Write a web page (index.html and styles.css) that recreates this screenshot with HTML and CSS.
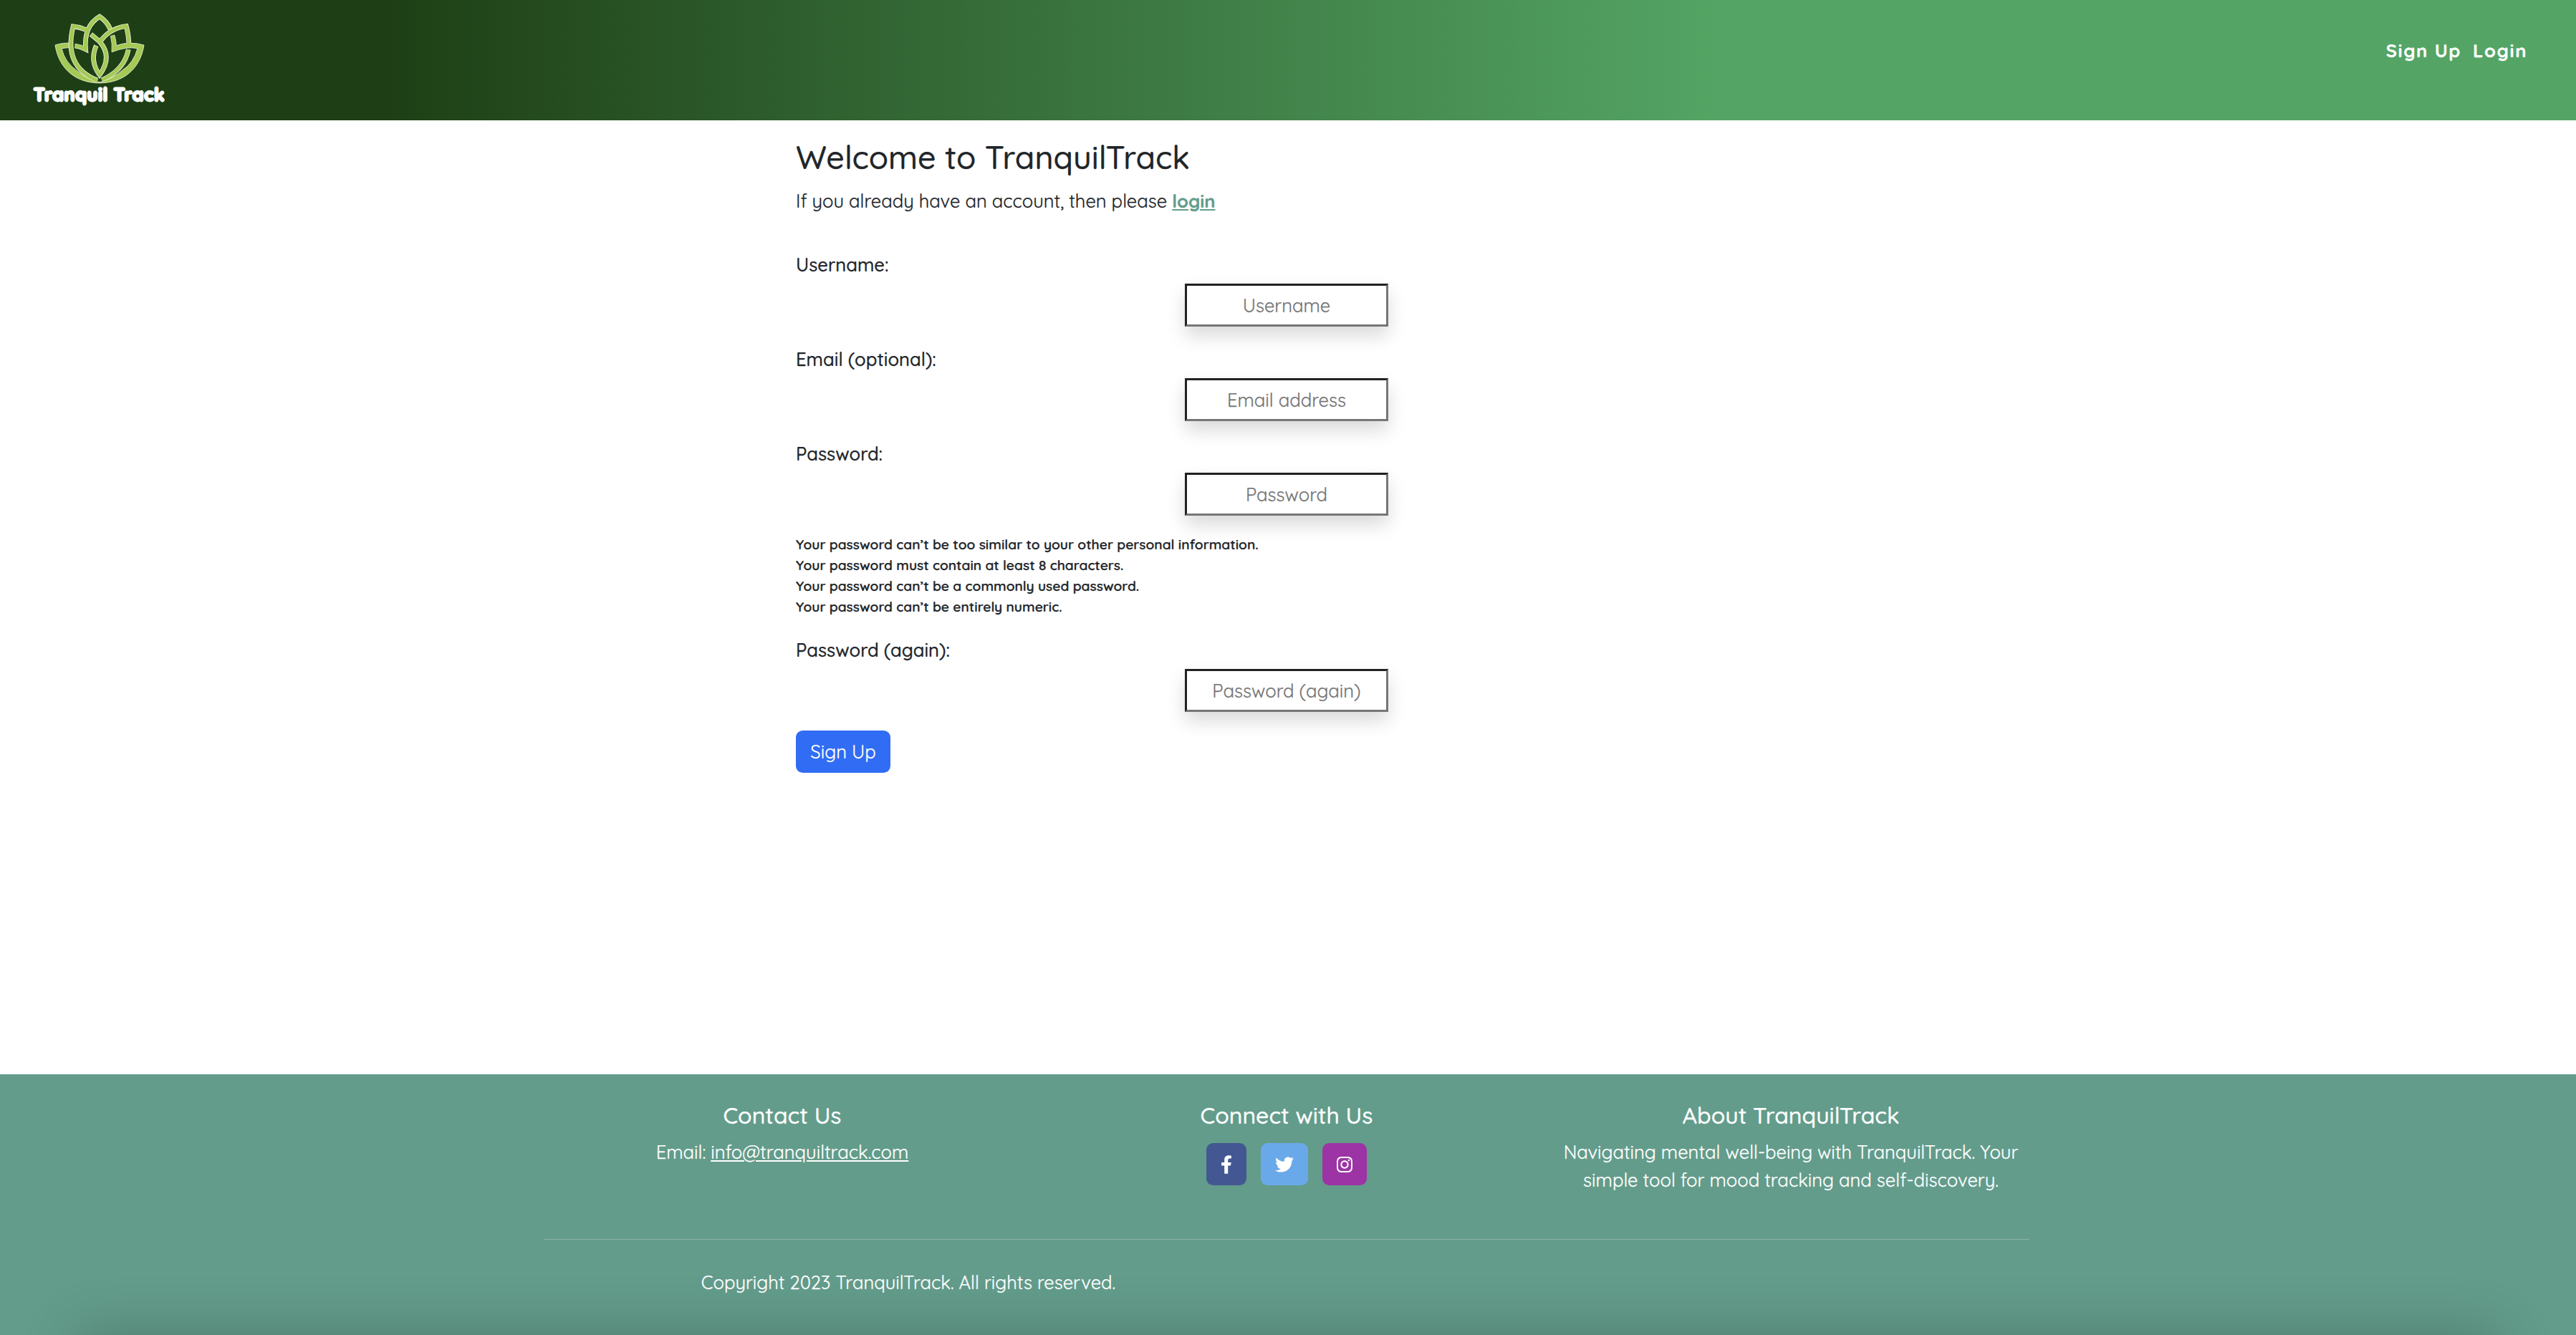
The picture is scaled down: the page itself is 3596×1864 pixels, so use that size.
FILE: index.html
```html
<!DOCTYPE html>
<html lang="en">
<head>
<meta charset="utf-8">
<title>TranquilTrack - Sign Up</title>
<link rel="stylesheet" href="styles.css">
</head>
<body>
<header class="header">
  <a class="brand">
    <svg class="lotus" viewBox="228 54 376 298" fill="none">
      <path class="leaf" d="M231 188Q262 177 303 180V199Q280 198 258 202Q272 262 325 297Q360 328 416 343V346C320 346 247 290 231 188Z"/>
      <g><path class="edge" d="M536 206Q520 290 426 334"/><path class="fill" d="M536 207Q520 290 426 334"/></g>
      <path class="leaf" d="M601 188Q540 170 486 190Q484 165 478 146L462 151Q470 180 467 217Q530 192 574 202Q558 262 512 292Q476 326 416 343V346C512 346 585 290 601 188Z"/>
      <g><path class="edge" d="M313 191Q335 193 358 205Q350 108 416 69Q446 88 461 122"/><path class="fill" d="M315 191Q335 193 358 205Q350 108 416 69Q446 88 461 122"/></g>
      <g><path class="edge" d="M359 124Q332 112 306 110Q264 278 406 334"/><path class="fill" d="M363 126Q332 112 306 110Q264 278 408 336"/></g>
      <g><path class="edge" d="M402 190Q374 255 416 312Q472 236 416 173L380 143"/><path class="fill" d="M402 192Q374 255 416 312Q472 236 416 173L382 144"/></g>
      <g><path class="edge" d="M422 168Q464 116 527 109Q536 140 538 179"/><path class="fill" d="M420 170Q464 116 527 109Q536 140 538 186"/></g>
    </svg>
    <span class="brand-name">Tranquil Track</span>
  </a>
  <nav class="nav"><a>Sign Up</a><a>Login</a></nav>
</header>

<main class="main">
  <h1 class="title">Welcome to TranquilTrack</h1>
  <p class="intro">If you already have an account, then please <a class="login-link">login</a></p>
  <form class="form">
    <label class="label" for="username">Username:</label>
    <input class="input" id="username" type="text" placeholder="Username">
    <label class="label" for="email">Email (optional):</label>
    <input class="input" id="email" type="email" placeholder="Email address">
    <label class="label" for="pw1">Password:</label>
    <input class="input" id="pw1" type="password" placeholder="Password">
    <ul class="help">
      <li>Your password can’t be too similar to your other personal information.</li>
      <li>Your password must contain at least 8 characters.</li>
      <li>Your password can’t be a commonly used password.</li>
      <li>Your password can’t be entirely numeric.</li>
    </ul>
    <label class="label" for="pw2">Password (again):</label>
    <input class="input" id="pw2" type="password" placeholder="Password (again)">
    <button class="submit" type="button">Sign Up</button>
  </form>
</main>

<footer class="footer">
  <div class="container">
    <div class="columns">
      <section class="column">
        <h2 class="heading">Contact Us</h2>
        <p class="text">Email: <a class="mail">info@tranquiltrack.com</a></p>
      </section>
      <section class="column">
        <h2 class="heading">Connect with Us</h2>
        <div class="socials">
          <a class="social facebook"><svg width="16" height="26" viewBox="0 0 320 512"><path d="M279.14 288l14.22-92.66h-88.91v-60.13c0-25.35 12.42-50.06 52.24-50.06h40.42V6.26S260.43 0 225.36 0c-73.22 0-121.08 44.38-121.08 124.72v70.62H22.89V288h81.39v224h100.17V288z"/></svg></a>
          <a class="social twitter"><svg width="26" height="26" viewBox="0 0 512 512"><path d="M459.37 151.716c.325 4.548.325 9.097.325 13.645 0 138.72-105.583 298.558-298.558 298.558-59.452 0-114.68-17.219-161.137-47.106 8.447.974 16.568 1.299 25.34 1.299 49.055 0 94.213-16.568 130.274-44.832-46.132-.975-84.792-31.188-98.112-72.772 6.498.974 12.995 1.624 19.818 1.624 9.421 0 18.843-1.3 27.614-3.573-48.081-9.747-84.143-51.98-84.143-102.985v-1.299c13.969 7.797 30.214 12.67 47.431 13.319-28.264-18.843-46.781-51.005-46.781-87.391 0-19.492 5.197-37.36 14.294-52.954 51.655 63.675 129.3 105.258 216.365 109.807-1.624-7.797-2.599-15.918-2.599-24.04 0-57.828 46.782-104.934 104.934-104.934 30.213 0 57.502 12.67 76.67 33.137 23.715-4.548 46.456-13.32 66.599-25.34-7.798 24.366-24.366 44.833-46.132 57.827 21.117-2.273 41.584-8.122 60.426-16.243-14.292 20.791-32.161 39.308-52.628 54.253z"/></svg></a>
          <a class="social instagram"><svg width="22" height="26" viewBox="0 0 448 512"><path d="M224.1 141c-63.6 0-114.9 51.3-114.9 114.9s51.3 114.9 114.9 114.9S339 319.5 339 255.900 287.700 141 224.100 141zm0 189.600c-41.100 0-74.700-33.500-74.700-74.700s33.500-74.700 74.700-74.700 74.700 33.500 74.700 74.700-33.600 74.700-74.700 74.700zm146.400-194.300c0 14.900-12 26.800-26.800 26.800-14.900 0-26.800-12-26.800-26.800s12-26.800 26.800-26.800 26.800 12 26.800 26.800zm76.100 27.200c-1.700-35.900-9.900-67.700-36.200-93.900-26.200-26.200-58-34.400-93.900-36.200-37-2.100-147.900-2.100-184.900 0-35.800 1.700-67.600 9.900-93.900 36.100s-34.400 58-36.200 93.900c-2.100 37-2.100 147.900 0 184.900 1.700 35.900 9.900 67.700 36.200 93.900s58 34.400 93.900 36.200c37 2.100 147.900 2.100 184.900 0 35.900-1.700 67.700-9.900 93.900-36.200 26.200-26.200 34.400-58 36.200-93.900 2.100-37 2.100-147.800 0-184.800zM398.800 388c-7.800 19.600-22.900 34.700-42.600 42.600-29.500 11.700-99.500 9-132.100 9s-102.700 2.600-132.100-9c-19.600-7.800-34.700-22.900-42.600-42.600-11.700-29.500-9-99.500-9-132.100s-2.600-102.700 9-132.100c7.800-19.600 22.900-34.700 42.600-42.600 29.500-11.700 99.500-9 132.100-9s102.700-2.600 132.100 9c19.600 7.800 34.700 22.900 42.600 42.600 11.700 29.500 9 99.500 9 132.100s2.700 102.700-9 132.100z"/></svg></a>
        </div>
      </section>
      <section class="column">
        <h2 class="heading">About TranquilTrack</h2>
        <p class="text">Navigating mental well-being with TranquilTrack. Your simple tool for mood tracking and self-discovery.</p>
      </section>
    </div>
    <hr class="rule">
    <p class="copyright">Copyright 2023 TranquilTrack. All rights reserved.</p>
  </div>
</footer>
</body>
</html>
```
FILE: styles.css
```css
* { box-sizing: border-box; }

html { font-size: 25.6px; }

body {
  margin: 0;
  height: 1864px;
  display: flex;
  flex-direction: column;
  overflow: hidden;
  background: #fff;
  color: #212529;
  font-family: "Quicksand", "Lato", sans-serif;
  font-size: 1rem;
  line-height: 1.5;
  -webkit-text-stroke: 0.25px currentColor;
}

h1, h2, p, ul { margin: 0; padding: 0; }

.header {
  height: 168px;
  display: flex;
  justify-content: space-between;
  align-items: flex-start;
  padding: 18px 68px 0 47px;
  background: linear-gradient(to right, #1e3f15 15%, #54a565 67%);
}

.brand {
  width: 183px;
  display: flex;
  flex-direction: column;
  align-items: center;
}

.lotus { width: 126px; height: 100px; stroke-linejoin: miter; }
.edge { stroke: #eef3dc; stroke-width: 20; }
.fill { stroke: #a4c954; stroke-width: 15; }
.leaf { fill: #a4c954; stroke: #eef3dc; stroke-width: 2.5; }

.brand-name {
  margin-top: -2px;
  color: #fff;
  font-size: 25px;
  font-weight: 700;
  line-height: 32px;
  white-space: nowrap;
  -webkit-text-stroke: 2.8px #fff;
  letter-spacing: 0.7px;
}

.nav {
  display: flex;
  gap: 16px;
  margin-top: 33px;
  color: #fff;
  font-weight: 700;
  letter-spacing: 1.6px;
}

.main {
  width: 1374px;
  margin-left: 1111px;
  padding-top: 25px;
}

.title {
  font-size: 1.75rem;
  font-weight: 500;
  line-height: 1.2;
}

.intro { margin-top: 14px; }

.login-link {
  color: #639c8b;
  font-weight: 700;
  text-decoration: underline;
}

.form {
  display: flex;
  flex-direction: column;
  align-items: flex-start;
  margin-top: 51px;
}

.label {
  height: 38px;
  font-weight: 500;
}

.input {
  width: 284px;
  height: 60px;
  margin: 8px 0 26px 543px;
  padding: 0;
  border: 3px solid;
  border-color: #212121 #767676 #767676 #212121;
  border-radius: 0;
  background: #fff;
  box-shadow: 0 12.8px 25.6px rgba(0, 0, 0, 0.15);
  font: inherit;
  text-align: center;
}

.input::placeholder { color: #757575; opacity: 1; }

.help {
  position: relative;
  margin-bottom: 26px;
  list-style: none;
  font-size: 19.2px;
  font-weight: 600;
  line-height: 29px;
}

.submit {
  width: 132px;
  height: 59px;
  padding: 0;
  border: 0;
  border-radius: 9.6px;
  background: #316cf4;
  color: #fff;
  font: inherit;
}

.footer {
  position: relative;
  flex: none;
  height: 364px;
  margin-top: auto;
  overflow: hidden;
  background: #639c8b;
  color: #fff;
}

/* Soft shade along the bottom edge */
.footer::after {
  content: "";
  position: absolute;
  left: 110px;
  right: 110px;
  top: 100%;
  height: 100px;
  box-shadow: 0 0 80px 4px rgba(0, 0, 0, 0.2);
}

.container { width: 2112px; margin-left: 740px; padding-top: 38px; }

.columns {
  display: grid;
  grid-template-columns: repeat(3, 704px);
  height: 192px;
}

.column { text-align: center; }

.heading {
  font-size: 1.25rem;
  font-weight: 500;
  line-height: 1.2;
}

.text {
  width: 660px;
  margin: 13px auto 0;
  line-height: 39px;
}

.mail { text-decoration: underline; }

.socials {
  display: flex;
  justify-content: center;
  gap: 20px;
  margin-top: 20px;
}

.social {
  height: 59px;
  display: flex;
  align-items: center;
  justify-content: center;
  border-radius: 9.6px;
}

.social svg { fill: #fff; }
.facebook { width: 56px; background: #435892; }
.twitter { width: 66px; background: #6aa9e9; }
.instagram { width: 62px; background: #9d34a5; }

.rule {
  width: 2074px;
  height: 1px;
  margin: 0 auto;
  border: 0;
  background: #8ab4a7;
}

.copyright {
  width: 1056px;
  margin-top: 40px;
  line-height: 39px;
  text-align: center;
}
```
